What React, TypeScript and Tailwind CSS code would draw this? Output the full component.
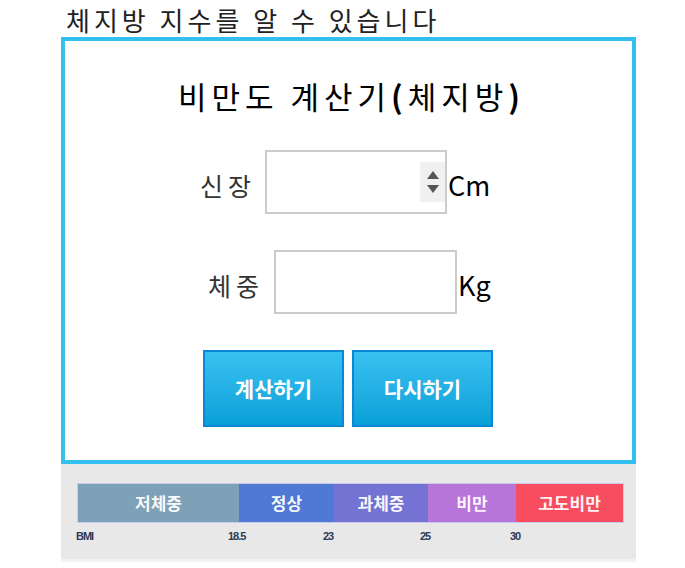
import React from 'react';

const kr = { fontFamily: '"Noto Sans CJK KR", "Noto Sans", sans-serif' };

function Spinner() {
  return (
    <div className="absolute right-0 top-[10px] flex h-[40px] w-[25px] flex-col items-center justify-center gap-[6px] bg-[#f0f0f0]">
      <svg width="12" height="8" viewBox="0 0 12 8">
        <path d="M6 0 L12 8 L0 8 Z" fill="#555" />
      </svg>
      <svg width="12" height="8" viewBox="0 0 12 8">
        <path d="M0 0 L12 0 L6 8 Z" fill="#555" />
      </svg>
    </div>
  );
}

const segments = [
  { name: '저체중', w: 'w-[161px]', bg: 'bg-[#7fa1b8]' },
  { name: '정상', w: 'w-[95px]', bg: 'bg-[#5079d5]' },
  { name: '과체중', w: 'w-[94px]', bg: 'bg-[#7473d3]' },
  { name: '비만', w: 'w-[88px]', bg: 'bg-[#b875d9]' },
  { name: '고도비만', w: 'w-[107px]', bg: 'bg-[#f84c5f]' },
];

export default function App() {
  return (
    <div className="min-h-[568px] w-[685px] bg-white" style={kr}>
      <div className="ml-[61px] w-[575px]">
        {/* title */}
        <div className="h-[37px] whitespace-nowrap pl-[5px] text-[26px] leading-[40px] tracking-[4px] text-[#222]">
          체지방 지수를 알 수 있습니다
        </div>

        {/* calculator box */}
        <div className="h-[427px] border-4 border-[#33bfef] bg-white">
          <div className="mt-[35px] h-[40px] pl-[6px] text-center text-[31px] leading-[40px] tracking-[5px] text-black">
            비만도 계산기<b className="font-bold">(</b>체지방<b className="font-bold">)</b>
          </div>

          <div className="mt-[34px] flex h-[64px] items-center pl-[135px]">
            <span className="mt-[8px] w-[65px] text-[25px] tracking-[5px] text-[#333]">신장</span>
            <div className="relative h-[64px] w-[182px] border-2 border-[#cccccc] bg-white">
              <Spinner />
            </div>
            <span className="ml-[1px] mt-[6px] text-[27px] text-black">Cm</span>
          </div>

          <div className="mt-[36px] flex h-[64px] items-center pl-[143px]">
            <span className="mt-[8px] w-[66px] text-[25px] tracking-[5px] text-[#333]">체중</span>
            <div className="h-[64px] w-[183px] border-2 border-[#cccccc] bg-white" />
            <span className="ml-[1px] mt-[6px] text-[27px] text-black">Kg</span>
          </div>

          <div className="mt-[36px] flex gap-[8px] pl-[138px]">
            <button className="h-[77px] w-[141px] border-2 border-[#0b87d6] bg-gradient-to-b from-[#37c1f1] to-[#06a0d8] text-[21px] font-bold text-white">
              계산하기
            </button>
            <button className="h-[77px] w-[141px] border-2 border-[#0b87d6] bg-gradient-to-b from-[#37c1f1] to-[#06a0d8] text-[21px] font-bold text-white">
              다시하기
            </button>
          </div>
        </div>

        {/* BMI scale */}
        <div className="h-[98px] border-b-[3px] border-[#f2f2f2] bg-[#e8e8e8] pl-[17px] pt-[20px]">
          <div className="flex h-[38px] w-[545px] outline outline-1 outline-[#c8cdf0]">
            {segments.map((s) => (
              <div
                key={s.name}
                className={`${s.w} ${s.bg} flex items-center justify-center text-[17px] font-bold text-white/95`}
              >
                {s.name}
              </div>
            ))}
          </div>
          <div
            className="relative mt-[6px] h-[14px] text-[11px] font-bold tracking-[-1px] text-[#2b3a57]"
            style={{ fontFamily: '"Liberation Sans Narrow", "Liberation Sans", sans-serif' }}
          >
            <span className="absolute left-[-2px]">BMI</span>
            <span className="absolute left-[150px]">18.5</span>
            <span className="absolute left-[245px]">23</span>
            <span className="absolute left-[342px]">25</span>
            <span className="absolute left-[432px]">30</span>
          </div>
        </div>
      </div>
    </div>
  );
}
